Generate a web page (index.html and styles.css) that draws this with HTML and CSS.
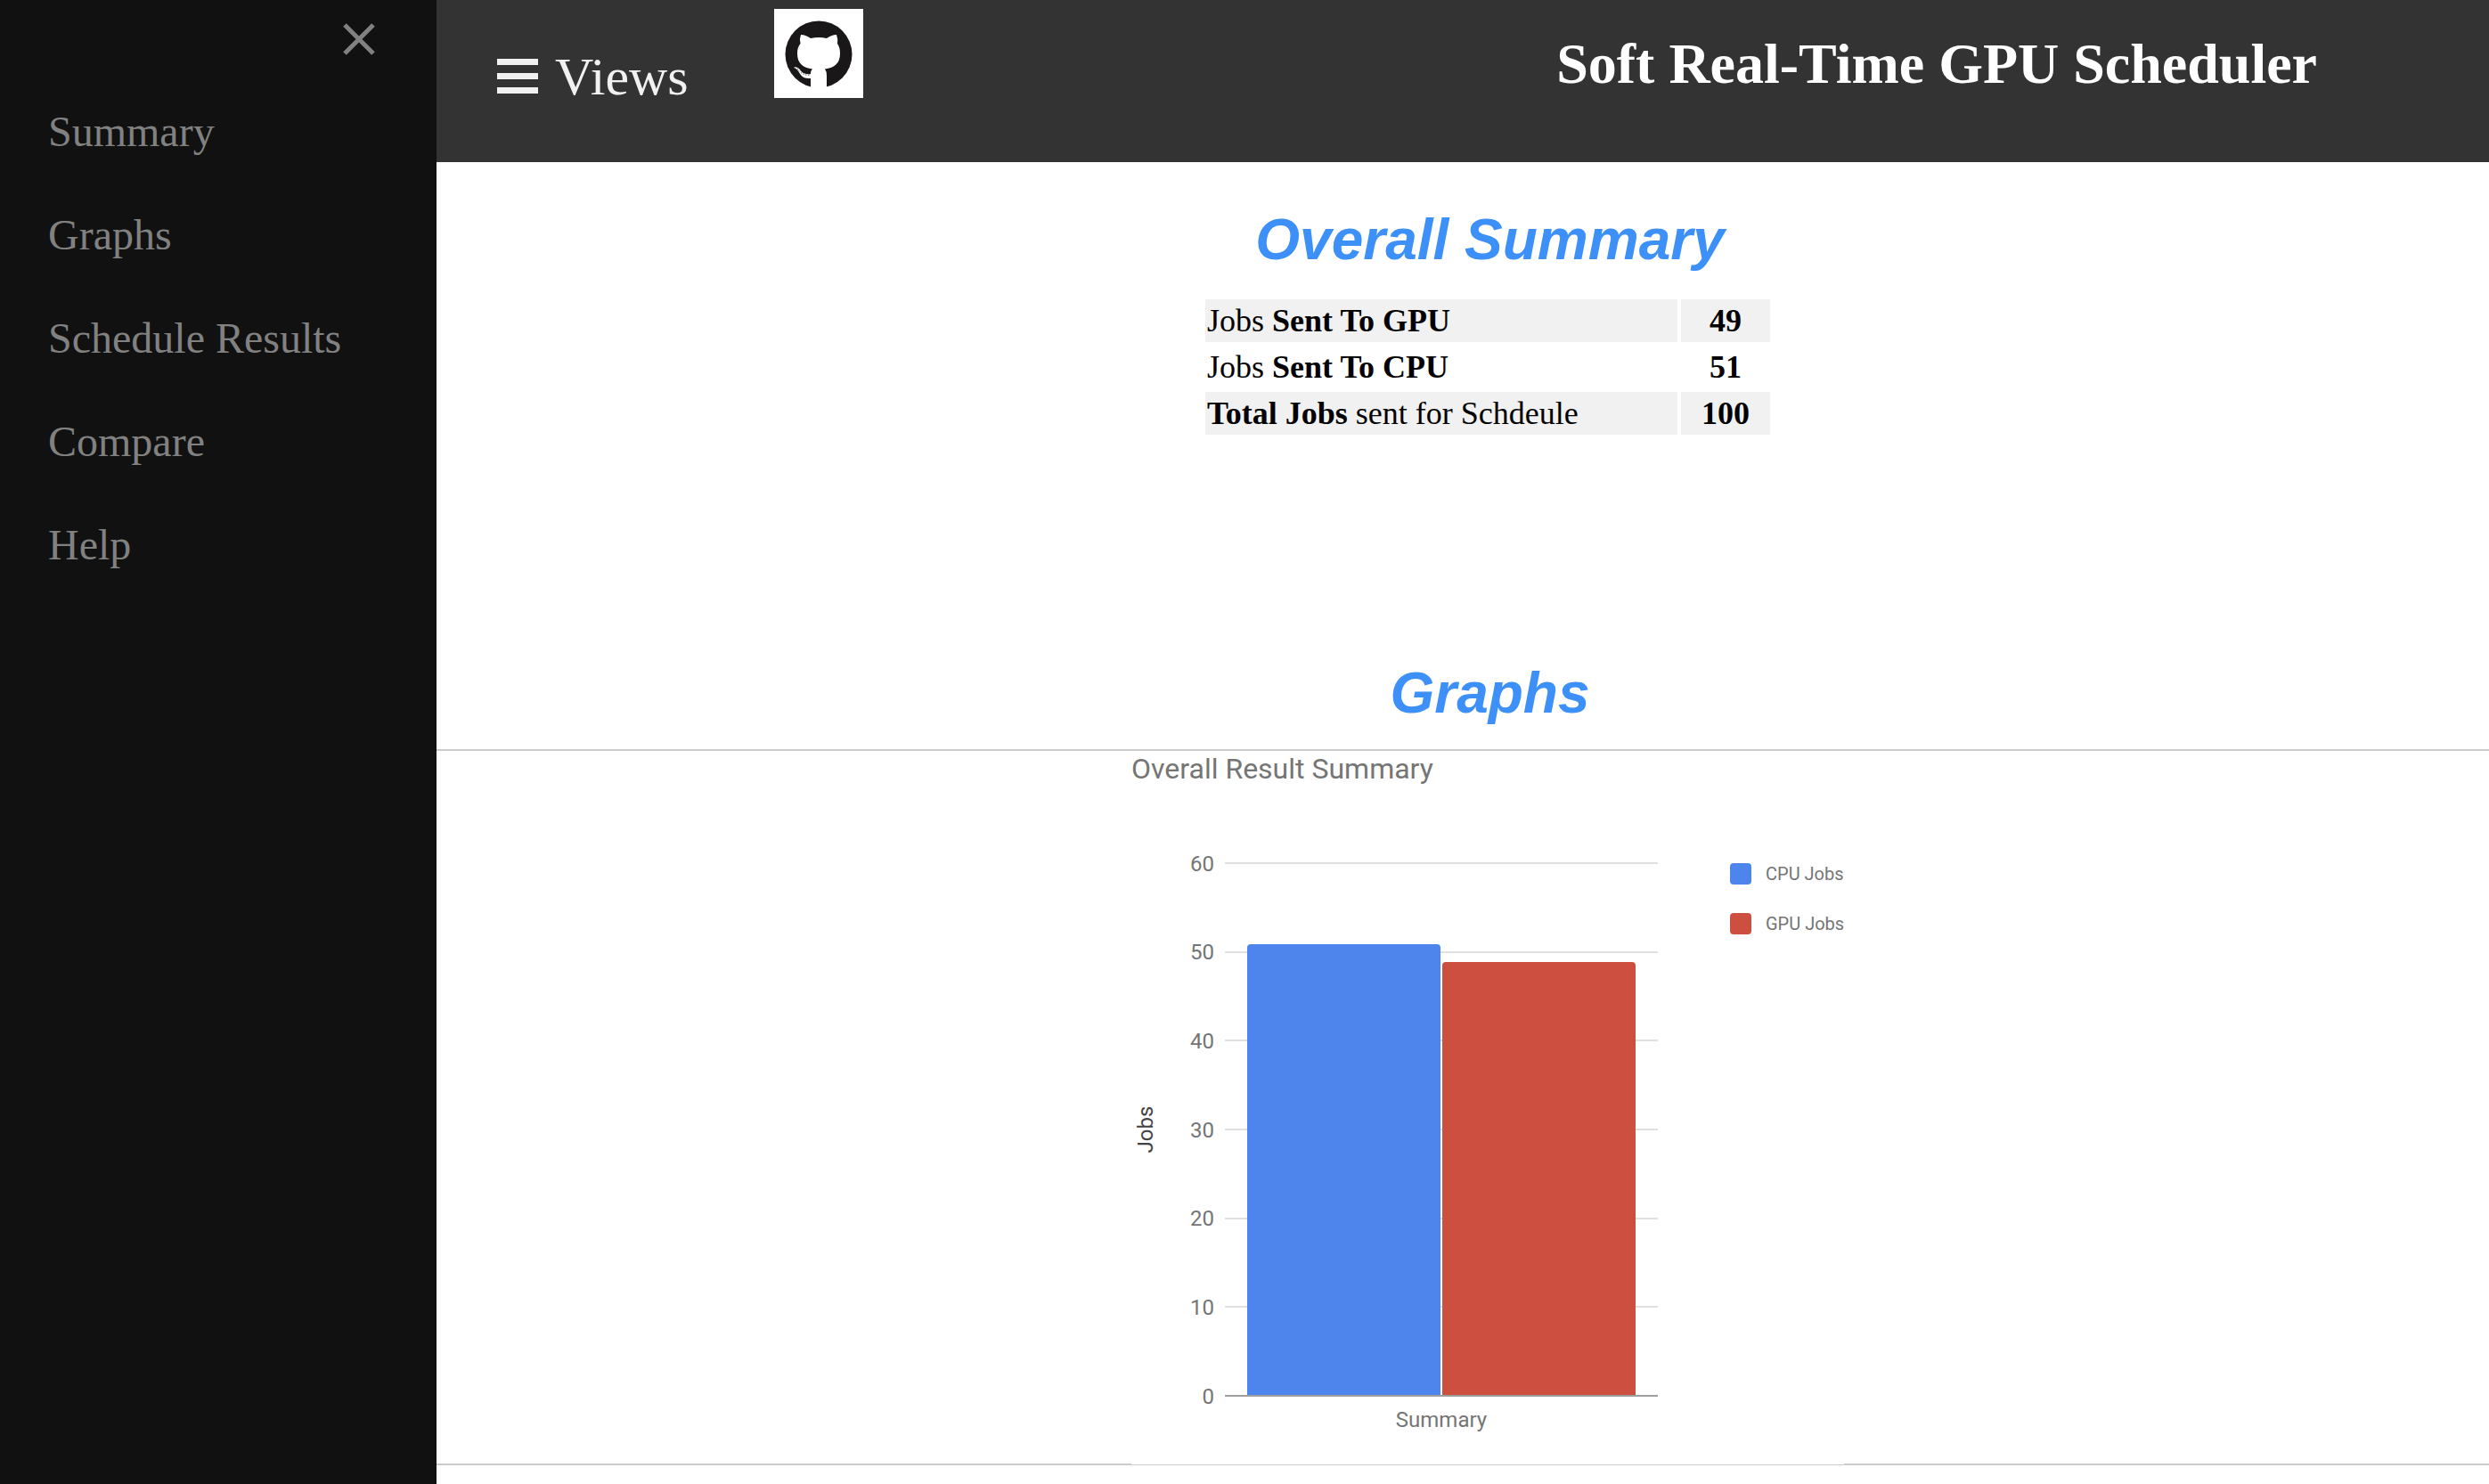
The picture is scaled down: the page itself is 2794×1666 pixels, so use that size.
FILE: index.html
```html
<!DOCTYPE html>
<html lang="en">
<head>
<meta charset="utf-8">
<title>Soft Real-Time GPU Scheduler</title>
<link rel="stylesheet" href="styles.css">
</head>
<body>
<aside class="sidenav">
  <button class="close" type="button" aria-label="Close menu">
    <svg viewBox="0 0 36 36" width="36" height="36"><path d="M2 2L34 34M34 2L2 34" stroke="currentColor" stroke-width="5"/></svg>
  </button>
  <nav class="links">
    <a href="#summary">Summary</a>
    <a href="#graphs">Graphs</a>
    <a href="#results">Schedule Results</a>
    <a href="#compare">Compare</a>
    <a href="#help">Help</a>
  </nav>
</aside>
<div class="page">
  <header class="topbar">
    <button class="views" type="button">
      <svg viewBox="0 0 46 40" width="46" height="40"><path d="M0 0h46v7H0zM0 16h46v7H0zM0 32h46v7H0z" fill="currentColor"/></svg>
      <span>Views</span>
    </button>
    <a class="github" href="#github" aria-label="GitHub">
      <svg viewBox="0 0 100 100" width="100" height="100">
        <circle cx="50" cy="51" r="37.500" fill="#191717"/>
        <path fill="#fff" d="M30 29C34 29 38 31 41 33Q50 31 59 33C62 31 66 29 70 29Q72 34 71 39Q74 43 74 50C74 61 68 66 57 67.500Q59 70 59 75V90H41V78C31 79 29.500 73 26.500 69Q24 66 22 66Q24 64 28 67C31 72 35 74 41 73Q41 69 43 67.500C32 66 26 61 26 50Q26 43 29.500 39Q28 34 30 29Z"/>
        <path fill="none" stroke="#191717" stroke-width="1" stroke-dasharray="1 2" d="M26 67C29 72 34 75 41 74"/>
      </svg>
    </a>
    <h1 class="title">Soft Real-Time GPU Scheduler</h1>
  </header>
  <main>
    <section class="summary" id="summary">
      <h2>Overall Summary</h2>
      <div class="table-row">
        <table>
          <tbody>
            <tr><td>Jobs <b>Sent To GPU</b></td><td class="count">49</td></tr>
            <tr><td>Jobs <b>Sent To CPU</b></td><td class="count">51</td></tr>
            <tr><td><b>Total Jobs</b> sent for Schdeule</td><td class="count">100</td></tr>
          </tbody>
        </table>
      </div>
    </section>
    <section id="graphs">
      <h2>Graphs</h2>
      <div class="chart-row">
        <svg class="chart" viewBox="0 0 800 801" width="800" height="801" role="img" aria-label="Overall Result Summary">
          <rect width="800" height="801" fill="#fff"/>
          <text class="chart-title" x="0" y="31">Overall Result Summary</text>
          <path class="grid" d="M105 126H591M105 226H591M105 325H591M105 425H591M105 525H591M105 624H591"/>
          <g class="tick">
            <text x="93" y="135">60</text>
            <text x="93" y="234">50</text>
            <text x="93" y="334">40</text>
            <text x="93" y="434">30</text>
            <text x="93" y="533">20</text>
            <text x="93" y="633">10</text>
            <text x="93" y="733">0</text>
          </g>
          <path class="cpu" d="M130 723V221q0-4 4-4H343q4 0 4 4V723z"/>
          <path class="gpu" d="M349 723V241q0-4 4-4H562q4 0 4 4V723z"/>
          <path class="axis" d="M105 724H591"/>
          <text class="category" x="348" y="759">Summary</text>
          <text class="axis-title" x="24" y="425" transform="rotate(-90 24 425)">Jobs</text>
          <rect class="cpu" x="672" y="126" width="24" height="24" rx="4"/>
          <text class="legend" x="712" y="145">CPU Jobs</text>
          <rect class="gpu" x="672" y="182" width="24" height="24" rx="4"/>
          <text class="legend" x="712" y="201">GPU Jobs</text>
        </svg>
      </div>
    </section>
  </main>
</div>
</body>
</html>
```
FILE: styles.css
```css
* { box-sizing: border-box; }

body {
  margin: 0;
  min-height: 100vh;
  display: flex;
  background: #fff;
  color: #000;
  font-family: "Liberation Serif", "Times New Roman", serif;
}

button {
  border: 0;
  padding: 0;
  background: none;
  color: inherit;
  font: inherit;
  cursor: pointer;
}

svg { display: block; }

.sidenav {
  flex: 0 0 490px;
  background: #111;
  color: #818181;
}

.close { display: block; margin: 26px 69px 0 auto; }

.links {
  display: flex;
  flex-direction: column;
  margin-top: 28px;
}

.links a {
  padding: 30px 16px 30px 54px;
  font-size: 48px;
  line-height: 56px;
  color: inherit;
  text-decoration: none;
}

.page { flex: 1; min-width: 0; }

.topbar {
  display: flex;
  align-items: flex-start;
  height: 182px;
  padding: 10px 193px 0 68px;
  background: #333;
  color: #f1f1f1;
}

.views {
  display: flex;
  align-items: center;
  gap: 19px;
  margin-top: 41px;
  font-size: 60px;
  line-height: 70px;
}

.github { margin-left: 96px; background: #fff; }

.title {
  margin: 24px 0 0 auto;
  font-size: 64px;
  line-height: 76px;
  color: #fff;
}

main { padding-top: 49px; }

h2 {
  margin: 0;
  padding-left: 61px;
  font: italic bold 64px/76px "Liberation Sans", Arial, sans-serif;
  text-align: center;
  color: #3d90f8;
}

.summary { min-height: 509px; }

.table-row {
  display: flex;
  justify-content: center;
  padding: 25px 0 0 56px;
}

table {
  width: 642px;
  border-spacing: 4px;
  font-size: 36px;
  line-height: 44px;
}

td { padding: 2px; }
tr:nth-child(odd) td { background: #f1f1f1; }
.count { width: 100px; text-align: center; font-weight: bold; }

.chart-row {
  display: flex;
  justify-content: center;
  margin-top: 25px;
  padding-left: 56px;
  border-top: 2px solid #ccc;
  border-bottom: 2px solid #ccc;
}

/* The chart's white ground covers the upper half of the rule below it. */
.chart {
  position: relative;
  margin-bottom: -1px;
  font-family: Roboto, sans-serif;
  fill: #757575;
}

.chart-title { font-size: 32px; }
.tick { font-size: 24px; text-anchor: end; }
.category { font-size: 24px; text-anchor: middle; }
.axis-title { font-size: 24px; text-anchor: middle; fill: #424242; }
.legend { font-size: 20px; }
.grid { stroke: #e0e0e0; stroke-width: 2; }
.axis { stroke: #9e9e9e; stroke-width: 2; }
.cpu { fill: #4e85ec; }
.gpu { fill: #cc4f40; }
```
